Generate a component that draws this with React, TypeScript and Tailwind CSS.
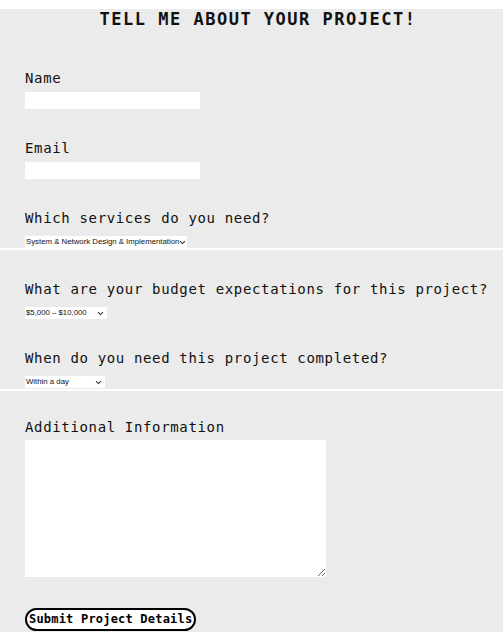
import React from 'react';

const labelCls = "block whitespace-nowrap text-[14px] leading-[16px] tracking-[0.65px] text-[#111]";

const Chevron: React.FC = () => (
    <svg width="7" height="5" viewBox="0 0 7 5" className="shrink-0">
        <path d="M1 1.2 L3.5 3.6 L6 1.2" fill="none" stroke="#333" strokeWidth="1.1" />
    </svg>
);

interface PickerProps {
    value: string;
    width: string;
}

// Compact select look: white box, tiny Arial text, chevron at the right
const Picker: React.FC<PickerProps> = ({ value, width }) => (
    <div
        className={`flex items-center justify-between h-[12px] bg-white pl-[1px] pr-[3px] ${width}`}
        style={{ fontFamily: '"Liberation Sans", Arial, sans-serif' }}
    >
        <span className="text-[7.8px] leading-[12px] text-[#111] whitespace-nowrap">{value}</span>
        <Chevron />
    </div>
);

const App: React.FC = () => {
    return (
        <div className="bg-white pt-[9px] pb-[5px] min-h-[637px]" style={{ fontFamily: '"DejaVu Sans Mono", monospace' }}>
            {/* Contact details */}
            <section className="bg-[#ebebeb] h-[239px] pl-[25px]">
                <h1 className="text-center text-[17px] leading-[20px] font-bold tracking-[1.5px] text-[#111] pr-[12px]">
                    TELL ME ABOUT YOUR PROJECT!
                </h1>

                <label className={`${labelCls} mt-[41px]`}>Name</label>
                <input type="text" className="block mt-[6px] w-[175px] h-[17px] bg-white border-0 outline-none" />

                <label className={`${labelCls} mt-[31px]`}>Email</label>
                <input type="email" className="block mt-[6px] w-[175px] h-[17px] bg-white border-0 outline-none" />

                <label className={`${labelCls} mt-[31px]`}>Which services do you need?</label>
                <div className="mt-[10px]">
                    <Picker value="System & Network Design & Implementation" width="w-[162px]" />
                </div>
            </section>

            {/* Budget & timeline */}
            <section className="bg-[#ebebeb] h-[139px] mt-[2px] pl-[25px]">
                <label className={`${labelCls} pt-[31px]`}>What are your budget expectations for this project?</label>
                <div className="mt-[10px]">
                    <Picker value="$5,000 – $10,000" width="w-[82px]" />
                </div>

                <label className={`${labelCls} mt-[31px]`}>When do you need this project completed?</label>
                <div className="mt-[10px]">
                    <Picker value="Within a day" width="w-[80px]" />
                </div>
            </section>

            {/* Extra info */}
            <section className="bg-[#ebebeb] h-[241px] mt-[2px] pl-[25px]">
                <label className={`${labelCls} pt-[28px]`}>Additional Information</label>
                <textarea className="block mt-[5px] w-[301px] h-[137px] bg-white border-0 outline-none resize" />

                <button
                    type="button"
                    className="block mt-[31px] h-[23px] px-[2px] border-2 border-black rounded-full bg-white text-[12px] leading-[15px] font-bold tracking-[0.2px] text-black"
                    style={{ fontFamily: '"DejaVu Sans Mono", monospace' }}
                >
                    Submit Project Details
                </button>
            </section>
        </div>
    );
};

export default App;
